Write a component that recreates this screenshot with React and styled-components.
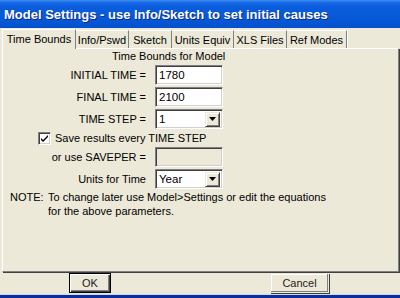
import React from "react";
import styled, { createGlobalStyle } from "styled-components";

const Global = createGlobalStyle`
  html, body { margin: 0; padding: 0; background: #ECE9D8; }
  body { font-family: "Liberation Sans", Arial, sans-serif; font-size: 11px; color: #000; }
`;

const Window = styled.div`
  width: 400px;
  height: 298px;
  overflow: hidden;
  background: #ECE9D8;
  display: flex;
  flex-direction: column;
`;

const TitleBar = styled.div`
  height: 28px;
  flex: none;
  display: flex;
  align-items: center;
  padding-left: 4px;
  box-sizing: border-box;
  background: linear-gradient(#3C8EF3 0px, #1566E6 3px, #0A5DDA 8px, #0658D6 20px, #0550CB 28px);
  color: #fff;
  font-family: "Liberation Sans", Arial, sans-serif;
  font-weight: bold;
  font-size: 13px;
  letter-spacing: 0px;
  text-shadow: 1px 1px 0 #0A2A8A;
  white-space: nowrap;
`;

const TabStrip = styled.div`
  height: 20px;
  flex: none;
  display: flex;
  align-items: flex-end;
  padding-left: 2px;
  position: relative;
  z-index: 1;
`;

const Tab = styled.div`
  box-sizing: border-box;
  width: ${(p) => p.$w}px;
  height: ${(p) => (p.$active ? 20 : 18)}px;
  margin-bottom: ${(p) => (p.$active ? -1 : 0)}px;
  background: #ECE9D8;
  border-top: 1px solid #fff;
  border-left: ${(p) => (p.$active ? "1px solid #fff" : "none")};
  border-right: 1px solid #808080;
  box-shadow: 1px 0 0 #fff;
  display: flex;
  align-items: center;
  justify-content: center;
  font-size: 11px;
  white-space: nowrap;
  padding-bottom: ${(p) => (p.$active ? 2 : 0)}px;
`;

const Panel = styled.div`
  flex: none;
  height: 224px;
  box-sizing: border-box;
  margin: 0 1px 0 2px;
  border-top: 1px solid #fff;
  border-left: 1px solid #fff;
  border-right: 1px solid #808080;
  border-bottom: 1px solid #808080;
  box-shadow: 1px 1px 0 #404040;
  padding-top: 1px;
  display: flex;
  flex-direction: column;
`;

const Heading = styled.div`
  line-height: 13px;
  padding-left: 109px;
  height: 13px;
`;

const Form = styled.div`
  margin-top: 2px;
  display: flex;
  flex-direction: column;
  gap: 2px;
`;

const Row = styled.div`
  display: flex;
  align-items: center;
  height: 20px;
`;

const Label = styled.div`
  width: 143px;
  text-align: right;
  margin-right: 9px;
  white-space: nowrap;
`;

const Field = styled.div`
  box-sizing: border-box;
  width: 68px;
  height: 20px;
  background: ${(p) => (p.$disabled ? "#ECE9D8" : "#fff")};
  border-top: 1px solid #808080;
  border-left: 1px solid #808080;
  border-right: 1px solid #fff;
  border-bottom: 1px solid #fff;
  box-shadow: inset 1px 1px 0 #404040, inset -1px -1px 0 #D4D0C8;
  display: flex;
  align-items: center;
  padding-left: 3px;
  padding-right: 2px;
  font-size: 11.5px;
`;

const FieldText = styled.span`
  flex: 1;
`;

const DropBtn = styled.div`
  box-sizing: border-box;
  width: 15px;
  height: 15px;
  background: #ECE9D8;
  border-top: 1px solid #ECE9D8;
  border-left: 1px solid #ECE9D8;
  border-right: 1px solid #404040;
  border-bottom: 1px solid #404040;
  box-shadow: inset 1px 1px 0 #fff, inset -1px -1px 0 #808080;
  display: flex;
  align-items: center;
  justify-content: center;
`;

const CheckRow = styled.div`
  display: flex;
  align-items: center;
  height: 14px;
  padding-left: 35px;
  gap: 4px;
`;

const CheckBox = styled.div`
  box-sizing: border-box;
  width: 13px;
  height: 13px;
  background: #fff;
  border-top: 1px solid #808080;
  border-left: 1px solid #808080;
  border-right: 1px solid #fff;
  border-bottom: 1px solid #fff;
  box-shadow: inset 1px 1px 0 #404040, inset -1px -1px 0 #D4D0C8;
  display: flex;
  align-items: center;
  justify-content: center;
`;

const Note = styled.div`
  margin-top: 1px;
  display: grid;
  grid-template-columns: 38px auto;
  padding-left: 7px;
  line-height: 14px;
`;

const Footer = styled.div`
  flex: none;
  height: 22px;
  display: flex;
  align-items: flex-start;
  padding-top: 1px;
  box-sizing: border-box;
`;

const Button = styled.div`
  box-sizing: border-box;
  width: ${(p) => p.$w}px;
  height: 20px;
  margin-left: ${(p) => p.$ml}px;
  background: #ECE9D8;
  display: flex;
  align-items: center;
  justify-content: center;
  font-size: 11px;
  color: #222;
  border: 1px solid ${(p) => (p.$default ? "#000" : "#ECE9D8")};
  box-shadow: ${(p) =>
    p.$default
      ? "inset 1px 1px 0 #fff, inset -1px -1px 0 #404040, inset -2px -2px 0 #808080"
      : "inset 0 0 0 0 #fff, 1px 1px 0 #404040, inset -1px -1px 0 #808080, inset 1px 1px 0 #fff"};
`;

const BottomFrame = styled.div`
  flex: none;
  height: 4px;
  border-top: 1px solid #C9DCF5;
  background: #0B2F98;
`;

const Arrow = () => (
  <svg width="7" height="4" viewBox="0 0 7 4">
    <path d="M0 0h7L3.5 4z" fill="#000" />
  </svg>
);

const Check = () => (
  <svg width="9" height="9" viewBox="0 0 9 9">
    <path d="M1 4l2 2 5-5v2L3 8 1 6z" fill="#000" />
  </svg>
);

const tabs = [
  { label: "Time Bounds", w: 74, active: true },
  { label: "Info/Pswd", w: 53 },
  { label: "Sketch", w: 43 },
  { label: "Units Equiv", w: 62 },
  { label: "XLS Files", w: 53 },
  { label: "Ref Modes", w: 60 },
];

export default function App() {
  return (
    <>
      <Global />
      <Window>
        <TitleBar>Model Settings - use Info/Sketch to set initial causes</TitleBar>
        <TabStrip>
          {tabs.map((t) => (
            <Tab key={t.label} $w={t.w} $active={t.active}>
              {t.label}
            </Tab>
          ))}
        </TabStrip>
        <Panel>
          <Heading>Time Bounds for Model</Heading>
          <Form>
            <Row>
              <Label>INITIAL TIME =</Label>
              <Field><FieldText>1780</FieldText></Field>
            </Row>
            <Row>
              <Label>FINAL TIME =</Label>
              <Field><FieldText>2100</FieldText></Field>
            </Row>
            <Row>
              <Label>TIME STEP =</Label>
              <Field>
                <FieldText>1</FieldText>
                <DropBtn><Arrow /></DropBtn>
              </Field>
            </Row>
            <CheckRow>
              <CheckBox><Check /></CheckBox>
              <span>Save results every TIME STEP</span>
            </CheckRow>
            <Row>
              <Label>or use SAVEPER =</Label>
              <Field $disabled />
            </Row>
            <Row>
              <Label>Units for Time</Label>
              <Field>
                <FieldText>Year</FieldText>
                <DropBtn><Arrow /></DropBtn>
              </Field>
            </Row>
          </Form>
          <Note>
            <span>NOTE:</span>
            <span>
              To change later use Model&gt;Settings or edit the equations
              <br />
              for the above parameters.
            </span>
          </Note>
        </Panel>
        <Footer>
          <Button $w={42} $ml={69} $default>OK</Button>
          <Button $w={59} $ml={159}>Cancel</Button>
        </Footer>
        <BottomFrame />
      </Window>
    </>
  );
}
